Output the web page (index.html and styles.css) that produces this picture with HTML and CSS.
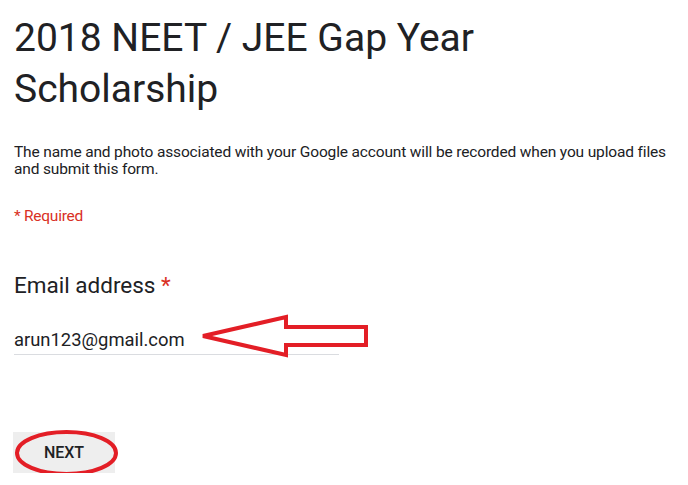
FILE: index.html
```html
<!DOCTYPE html>
<html>
<head>
<meta charset="utf-8">
<link rel="stylesheet" href="styles.css">
</head>
<body>
<div class="form">
  <h1 class="title">2018 NEET / JEE Gap Year Scholarship</h1>
  <p class="desc">The name and photo associated with your Google account will be recorded when you upload files and submit this form.</p>
  <p class="required">* Required</p>
  <div class="question">
    <div class="label">Email address <span class="star">*</span></div>
    <div class="field">
      <div class="input">arun123@gmail.com</div>
      <svg class="arrow" width="180" height="50" viewBox="0 0 180 50">
        <polygon points="13,27 96,8 96,18 176,18 176,36 96,36 96,46" fill="none" stroke="#e31e26" stroke-width="4" stroke-linejoin="miter"/>
      </svg>
    </div>
  </div>
  <div class="actions">
    <div class="btn">NEXT
      <svg class="ring" width="115" height="52" viewBox="0 0 115 52">
        <ellipse cx="56.5" cy="26" rx="49.5" ry="21" fill="none" stroke="#e31e26" stroke-width="4"/>
      </svg>
    </div>
  </div>
</div>
</body>
</html>
```
FILE: styles.css
```css
html, body {
  margin: 0;
  padding: 0;
  background: #fff;
}
body {
  font-family: Roboto, "Liberation Sans", sans-serif;
  color: #202124;
}
.form {
  padding: 13px 14px 0 14px;
}
.title {
  margin: 0;
  font-size: 39px;
  font-weight: 400;
  line-height: 51px;
  width: 480px;
  color: #202124;
}
.desc {
  margin: 29px 0 0 0;
  font-size: 15.5px;
  line-height: 17px;
  letter-spacing: -0.15px;
  color: #202124;
}
.required {
  margin: 30px 0 0 0;
  font-size: 15.5px;
  line-height: 17px;
  letter-spacing: -0.25px;
  color: #d93025;
}
.question {
  margin-top: 47px;
}
.label {
  font-size: 22.5px;
  line-height: 26px;
  color: #202124;
}
.star {
  color: #d93025;
}
.field {
  position: relative;
  margin-top: 31px;
}
.input {
  width: 325px;
  font-size: 18.4px;
  line-height: 22px;
  padding-bottom: 3px;
  border-bottom: 1px solid #dadce0;
}
.arrow {
  position: absolute;
  left: 176px;
  top: -20px;
}
.actions {
  margin-top: 77px;
}
.btn {
  position: relative;
  width: 102px;
  height: 41px;
  background: #eeeeee;
  display: flex;
  align-items: center;
  justify-content: center;
  font-size: 16px;
  font-weight: 500;
  color: #202124;
  margin-left: -1px;
}
.ring {
  position: absolute;
  left: -3px;
  top: -5px;
}
```
